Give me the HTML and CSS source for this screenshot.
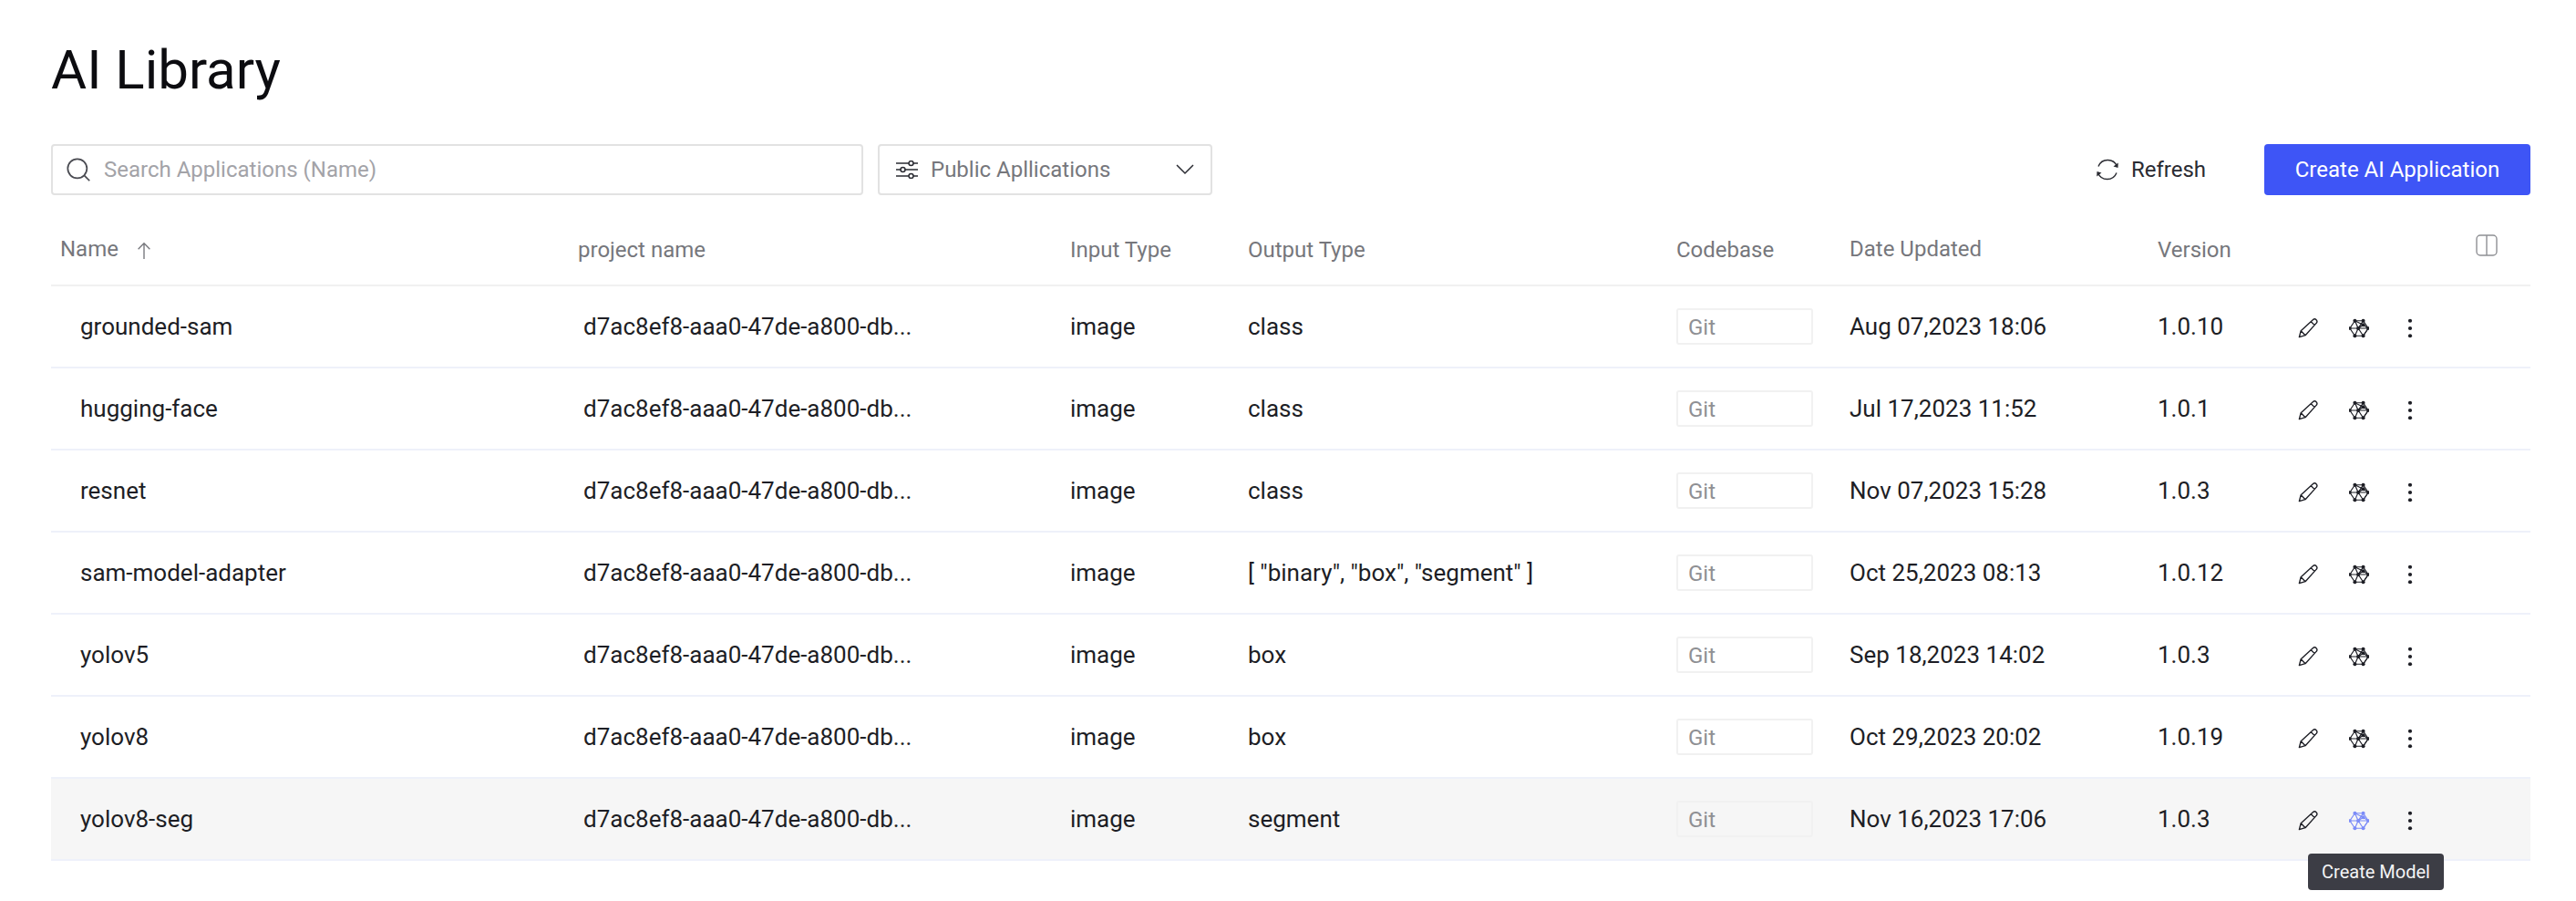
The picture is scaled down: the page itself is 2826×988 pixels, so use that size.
FILE: index.html
```html
<!DOCTYPE html>
<html lang="en">
<head>
    <meta charset="UTF-8">
    <title>AI Library</title>
    <link rel="stylesheet" href="styles.css">
</head>
<body>
    <svg class="icon-defs" width="0" height="0">
        <symbol id="i-edit" viewBox="0 0 24 24">
            <path d="M1.500 22.500l2-7.500L17.800 1.800c1.200-1.100 3-1.100 4.100.1s1.100 2.900 0 4L8.800 20.400z M3.500 15l5.300 5.400 M15.600 4l4.600 4.600" fill="none" stroke="currentColor" stroke-width="1.500" stroke-linejoin="round"/>
        </symbol>
        <symbol id="i-model" viewBox="0 0 24 24">
            <g fill="none" stroke="currentColor" stroke-width="1.300">
                <path d="M7 3h10l6 9-6 9H7l-6-9z"/>
                <path d="M7 3l4 9H1 M17 3l-6 9 12 0-6 9-6-9-4 9 M11 12l6-4 6 4 M7 3l10 5"/>
            </g>
            <g fill="currentColor">
                <circle cx="7" cy="3" r="2.200"/><circle cx="17" cy="3" r="2.200"/><circle cx="23" cy="12" r="2"/>
                <circle cx="17" cy="21" r="2.200"/><circle cx="7" cy="21" r="2.200"/><circle cx="1" cy="12" r="2"/>
                <circle cx="11" cy="12" r="2.200"/><circle cx="17" cy="8" r="2.200"/>
            </g>
        </symbol>
        <symbol id="i-more" viewBox="0 0 24 24">
            <circle cx="12" cy="3" r="2.300" fill="currentColor"/><circle cx="12" cy="12" r="2.300" fill="currentColor"/><circle cx="12" cy="21" r="2.300" fill="currentColor"/>
        </symbol>
    </svg>

    <h1 class="page-title">AI Library</h1>

    <!-- Toolbar -->
    <div class="toolbar">
        <div class="search-box">
            <svg class="search-icon" viewBox="0 0 24 24"><circle cx="11" cy="11" r="9" fill="none" stroke="currentColor" stroke-width="1.500"/><path d="M17.500 17.500l5 5" stroke="currentColor" stroke-width="1.500"/></svg>
            <span>Search Applications (Name)</span>
        </div>
        <div class="filter-box">
            <svg class="filter-icon" viewBox="0 0 24 20"><g fill="none" stroke="currentColor" stroke-width="1.500"><path d="M0 3h14M19 3h5M0 10h5M10 10h14M0 17h14M19 17h5"/><circle cx="16.500" cy="3" r="2.500"/><circle cx="7.500" cy="10" r="2.500"/><circle cx="16.500" cy="17" r="2.500"/></g></svg>
            <span class="filter-label">Public Apllications</span>
            <svg class="chevron" viewBox="0 0 20 12"><path d="M1 1l9 9 9-9" fill="none" stroke="currentColor" stroke-width="1.500"/></svg>
        </div>
        <div class="refresh">
            <svg class="refresh-icon" viewBox="0 0 26 26"><g fill="none" stroke="currentColor" stroke-width="1.400"><path d="M3 9.500A11 11 0 0 1 23.500 9.500"/><path d="M23 16.500A11 11 0 0 1 2.500 16.500"/></g><path d="M24.800 5.500l-.3 5.500-5-1.500z M1.200 20.500l.3-5.500 5 1.500z" fill="currentColor"/></svg>
            Refresh
        </div>
        <button class="create-btn">Create AI Application</button>
    </div>

    <!-- Applications table -->
    <table class="app-table">
        <colgroup>
            <col class="col-name"><col class="col-project"><col class="col-input"><col class="col-output">
            <col class="col-code"><col class="col-date"><col class="col-version"><col class="col-actions">
        </colgroup>
        <thead>
            <tr>
                <th class="th-name">Name <svg class="sort-icon" viewBox="0 0 20 22"><path d="M10 21V2M3 9l7-7 7 7" fill="none" stroke="currentColor" stroke-width="1.500"/></svg></th>
                <th>project name</th>
                <th>Input Type</th>
                <th>Output Type</th>
                <th>Codebase</th>
                <th class="th-raise">Date Updated</th>
                <th>Version</th>
                <th class="th-columns"><svg class="columns-icon" viewBox="0 0 24 24"><rect x="1" y="1" width="22" height="22" rx="4" fill="none" stroke="currentColor" stroke-width="1.400"/><path d="M12 1v22" stroke="currentColor" stroke-width="1.400"/></svg></th>
            </tr>
        </thead>
        <tbody>
            <tr>
                <td class="td-name">grounded-sam</td><td class="td-project">d7ac8ef8-aaa0-47de-a800-db...</td><td>image</td><td>class</td>
                <td><span class="git-tag">Git</span></td><td>Aug 07,2023 18:06</td><td>1.0.10</td>
                <td><div class="actions"><svg class="act-icon"><use href="#i-edit"/></svg><svg class="act-icon"><use href="#i-model"/></svg><svg class="act-icon"><use href="#i-more"/></svg></div></td>
            </tr>
            <tr>
                <td class="td-name">hugging-face</td><td class="td-project">d7ac8ef8-aaa0-47de-a800-db...</td><td>image</td><td>class</td>
                <td><span class="git-tag">Git</span></td><td>Jul 17,2023 11:52</td><td>1.0.1</td>
                <td><div class="actions"><svg class="act-icon"><use href="#i-edit"/></svg><svg class="act-icon"><use href="#i-model"/></svg><svg class="act-icon"><use href="#i-more"/></svg></div></td>
            </tr>
            <tr>
                <td class="td-name">resnet</td><td class="td-project">d7ac8ef8-aaa0-47de-a800-db...</td><td>image</td><td>class</td>
                <td><span class="git-tag">Git</span></td><td>Nov 07,2023 15:28</td><td>1.0.3</td>
                <td><div class="actions"><svg class="act-icon"><use href="#i-edit"/></svg><svg class="act-icon"><use href="#i-model"/></svg><svg class="act-icon"><use href="#i-more"/></svg></div></td>
            </tr>
            <tr>
                <td class="td-name">sam-model-adapter</td><td class="td-project">d7ac8ef8-aaa0-47de-a800-db...</td><td>image</td><td>[ "binary", "box", "segment" ]</td>
                <td><span class="git-tag">Git</span></td><td>Oct 25,2023 08:13</td><td>1.0.12</td>
                <td><div class="actions"><svg class="act-icon"><use href="#i-edit"/></svg><svg class="act-icon"><use href="#i-model"/></svg><svg class="act-icon"><use href="#i-more"/></svg></div></td>
            </tr>
            <tr>
                <td class="td-name">yolov5</td><td class="td-project">d7ac8ef8-aaa0-47de-a800-db...</td><td>image</td><td>box</td>
                <td><span class="git-tag">Git</span></td><td>Sep 18,2023 14:02</td><td>1.0.3</td>
                <td><div class="actions"><svg class="act-icon"><use href="#i-edit"/></svg><svg class="act-icon"><use href="#i-model"/></svg><svg class="act-icon"><use href="#i-more"/></svg></div></td>
            </tr>
            <tr>
                <td class="td-name">yolov8</td><td class="td-project">d7ac8ef8-aaa0-47de-a800-db...</td><td>image</td><td>box</td>
                <td><span class="git-tag">Git</span></td><td>Oct 29,2023 20:02</td><td>1.0.19</td>
                <td><div class="actions"><svg class="act-icon"><use href="#i-edit"/></svg><svg class="act-icon"><use href="#i-model"/></svg><svg class="act-icon"><use href="#i-more"/></svg></div></td>
            </tr>
            <tr class="row-hover">
                <td class="td-name">yolov8-seg</td><td class="td-project">d7ac8ef8-aaa0-47de-a800-db...</td><td>image</td><td>segment</td>
                <td><span class="git-tag">Git</span></td><td>Nov 16,2023 17:06</td><td>1.0.3</td>
                <td><div class="actions"><svg class="act-icon"><use href="#i-edit"/></svg><span class="tip-anchor"><svg class="act-icon act-active"><use href="#i-model"/></svg><span class="tooltip">Create Model</span></span><svg class="act-icon"><use href="#i-more"/></svg></div></td>
            </tr>
        </tbody>
    </table>
</body>
</html>
```

FILE: styles.css
```css
/* General Reset */
html, body {
    margin: 0;
    padding: 0;
    background: #fff;
    font-family: "Roboto", "Liberation Sans", sans-serif;
    color: #1d1e25;
}

body {
    padding: 0 50px 0 56px;
    height: 988px;
    overflow: hidden;
    box-sizing: border-box;
}

.icon-defs {
    position: absolute;
}

.page-title {
    margin: 0;
    padding-top: 42px;
    font-size: 60px;
    line-height: 70px;
    font-weight: 400;
    color: #0c0c10;
}

/* Toolbar */
.toolbar {
    display: flex;
    align-items: center;
    margin-top: 46px;
    height: 56px;
}

.search-box,
.filter-box {
    display: flex;
    align-items: center;
    box-sizing: border-box;
    height: 56px;
    border: 2px solid #e2e2e2;
    border-radius: 4px;
    font-size: 24px;
}

.search-box {
    width: 891px;
    padding-left: 14px;
    color: #a3a3a8;
}

.search-icon {
    width: 28px;
    height: 28px;
    margin-right: 14px;
    color: #4a4b52;
}

.filter-box {
    width: 367px;
    margin-left: 16px;
    padding: 0 18px;
    color: #76777c;
}

.filter-icon {
    width: 24px;
    height: 20px;
    margin-right: 14px;
    color: #2a2b32;
}

.filter-label {
    flex: 1;
}

.chevron {
    width: 20px;
    height: 12px;
    color: #2a2b32;
}

.refresh {
    display: flex;
    align-items: center;
    margin-left: auto;
    font-size: 24px;
    color: #2a2b32;
}

.refresh-icon {
    width: 26px;
    height: 26px;
    margin-right: 13px;
}

.create-btn {
    width: 292px;
    height: 56px;
    margin-left: 64px;
    background: #3e55f6;
    color: #fff;
    border: none;
    border-radius: 4px;
    font-family: inherit;
    font-size: 24px;
}

/* Table */
.app-table {
    width: 2720px;
    border-collapse: collapse;
    table-layout: fixed;
}

.col-name { width: 578px; }
.col-project { width: 540px; }
.col-input { width: 195px; }
.col-output { width: 470px; }
.col-code { width: 190px; }
.col-date { width: 338px; }
.col-version { width: 152px; }
.col-actions { width: 257px; }

.app-table th {
    height: 99px;
    padding: 22px 0 0;
    box-sizing: border-box;
    text-align: left;
    font-size: 24px;
    font-weight: 400;
    color: #76777c;
    border-bottom: 2px solid #f1f1f1;
}

.app-table .th-name {
    padding-bottom: 2px;
    padding-left: 10px;
}

.app-table .th-raise {
    padding-bottom: 2px;
}

.sort-icon {
    width: 20px;
    height: 20px;
    margin-left: 12px;
    vertical-align: -4px;
    color: #76777c;
}

.app-table .th-columns {
    padding-top: 18px;
    padding-right: 36px;
    text-align: right;
}

.columns-icon {
    width: 24px;
    height: 24px;
    color: #8f9094;
}

.app-table td {
    height: 90px;
    padding: 0;
    box-sizing: border-box;
    font-size: 26px;
    border-bottom: 2px solid #eef1fa;
    white-space: nowrap;
}

.app-table .td-name {
    padding-left: 32px;
}

.app-table .td-project {
    padding-left: 6px;
}

.git-tag {
    display: block;
    box-sizing: border-box;
    width: 150px;
    height: 40px;
    padding-left: 11px;
    border: 2px solid #f1f1f1;
    border-radius: 3px;
    font-size: 24px;
    line-height: 38px;
    color: #8f9094;
}

.actions {
    display: flex;
    align-items: center;
    gap: 34px;
    padding-left: 2px;
    margin-top: 4px;
}

.act-icon {
    display: block;
    width: 22px;
    height: 22px;
    color: #1d1e25;
}

.act-active {
    color: #7c8cf8;
}

.row-hover td {
    background: #f6f6f6;
}

.tip-anchor {
    position: relative;
    display: block;
}

/* Tooltip over the model button */
.tooltip {
    position: absolute;
    top: 47px;
    left: 50%;
    margin-left: -56px;
    width: 149px;
    height: 40px;
    background: #3c3d45;
    color: #f4f4f5;
    border-radius: 4px;
    font-size: 20px;
    line-height: 40px;
    text-align: center;
}
```
